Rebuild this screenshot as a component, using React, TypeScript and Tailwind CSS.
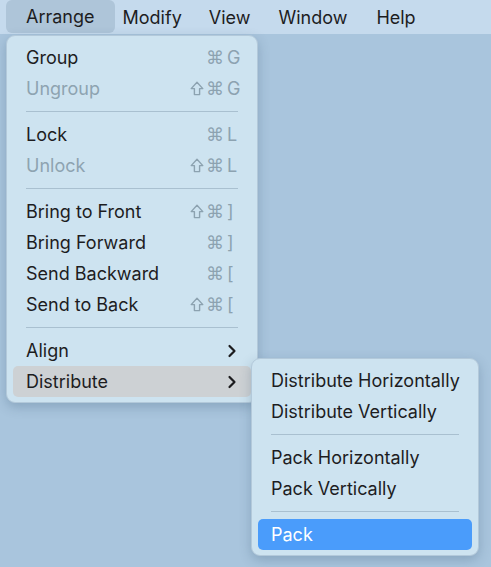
import React from "react";

type Item =
  | { type: "sep" }
  | { type: "item"; label: string; disabled?: boolean; shift?: boolean; cmd?: boolean; key?: string; sub?: boolean; hl?: "gray" | "blue" };

const mainItems: Item[] = [
  { type: "item", label: "Group", cmd: true, key: "G" },
  { type: "item", label: "Ungroup", disabled: true, shift: true, cmd: true, key: "G" },
  { type: "sep" },
  { type: "item", label: "Lock", cmd: true, key: "L" },
  { type: "item", label: "Unlock", disabled: true, shift: true, cmd: true, key: "L" },
  { type: "sep" },
  { type: "item", label: "Bring to Front", shift: true, cmd: true, key: "]" },
  { type: "item", label: "Bring Forward", cmd: true, key: "]" },
  { type: "item", label: "Send Backward", cmd: true, key: "[" },
  { type: "item", label: "Send to Back", shift: true, cmd: true, key: "[" },
  { type: "sep" },
  { type: "item", label: "Align", sub: true },
  { type: "item", label: "Distribute", sub: true, hl: "gray" },
];

const subItems: Item[] = [
  { type: "item", label: "Distribute Horizontally" },
  { type: "item", label: "Distribute Vertically" },
  { type: "sep" },
  { type: "item", label: "Pack Horizontally" },
  { type: "item", label: "Pack Vertically" },
  { type: "sep" },
  { type: "item", label: "Pack", hl: "blue" },
];

function Chevron() {
  return (
    <svg width="10" height="14" viewBox="0 0 10 14" className="mr-[3px]">
      <path d="M2.5 2 L7.5 7 L2.5 12" fill="none" stroke="#1c1c1e" strokeWidth="2.2" strokeLinecap="round" strokeLinejoin="round" />
    </svg>
  );
}

function ShiftIcon() {
  return (
    <svg width="14" height="15" viewBox="0 0 14 15">
      <path
        d="M7 1.2 L12.8 7.6 H9.6 V13.6 H4.4 V7.6 H1.2 Z"
        fill="none"
        stroke="#8ca2b0"
        strokeWidth="1.4"
        strokeLinejoin="round"
      />
    </svg>
  );
}

function Row({ it }: { it: Item }) {
  if (it.type === "sep") {
    return (
      <div className="h-[15px] flex items-center px-[13px]">
        <div className="h-px w-full bg-[#a9c0d0]" />
      </div>
    );
  }
  const bg = it.hl === "gray" ? "bg-[#cdd1d4]" : it.hl === "blue" ? "bg-[#4a9cfb]" : "";
  const color = it.hl === "blue" ? "text-white" : it.disabled ? "text-[#8ea3b1]" : "text-[#1d1d1f]";
  return (
    <div className={`h-[31px] flex items-center justify-between pl-[13px] pr-[11px] rounded-[5px] ${bg}`}>
      <span className={`text-[18px] leading-none ${color}`}>{it.label}</span>
      {it.sub ? (
        <Chevron />
      ) : it.key ? (
        <span className="flex items-center text-[18px] leading-none text-[#8ca2b0]">
          <span className="w-[16px] flex justify-center">{it.shift ? <ShiftIcon /> : null}</span>
          <span className="w-[20px] text-center" style={{ fontFamily: "'DejaVu Sans', sans-serif", fontSize: 18 }}>{it.cmd ? "⌘" : ""}</span>
          <span className="w-[15px] text-left pl-[2px]">{it.key}</span>
        </span>
      ) : null}
    </div>
  );
}

export default function App() {
  return (
    <div
      className="relative w-[491px] h-[567px] bg-[#a9c5dd] overflow-hidden"
      style={{ fontFamily: "Inter, 'Noto Sans', sans-serif" }}
    >
      <div className="h-[34px] bg-[#c5daed] flex items-center pl-[6px] text-[18px] text-[#1d1d1f]">
        <div className="h-[33px] self-start flex items-center px-[20px] rounded-[6px] bg-[#aec5d9]">Arrange</div>
        <div className="ml-[8px]">Modify</div>
        <div className="ml-[27px]">View</div>
        <div className="ml-[28px]">Window</div>
        <div className="ml-[29px]">Help</div>
      </div>

      <div className="absolute left-[6px] top-[35px] w-[252px] rounded-[9px] bg-[#cde3f0] border border-[#b3c9da] shadow-[0_4px_12px_rgba(40,70,100,0.25)] px-[6px] pt-[6px] pb-[5px]">
        {mainItems.map((it, i) => (
          <Row key={i} it={it} />
        ))}
      </div>

      <div className="absolute left-[251px] top-[358px] w-[228px] rounded-[9px] bg-[#cde3f0] border border-[#b3c9da] shadow-[0_4px_12px_rgba(40,70,100,0.25)] px-[6px] pt-[6px] pb-[5px]">
        {subItems.map((it, i) => (
          <Row key={i} it={it} />
        ))}
      </div>
    </div>
  );
}
